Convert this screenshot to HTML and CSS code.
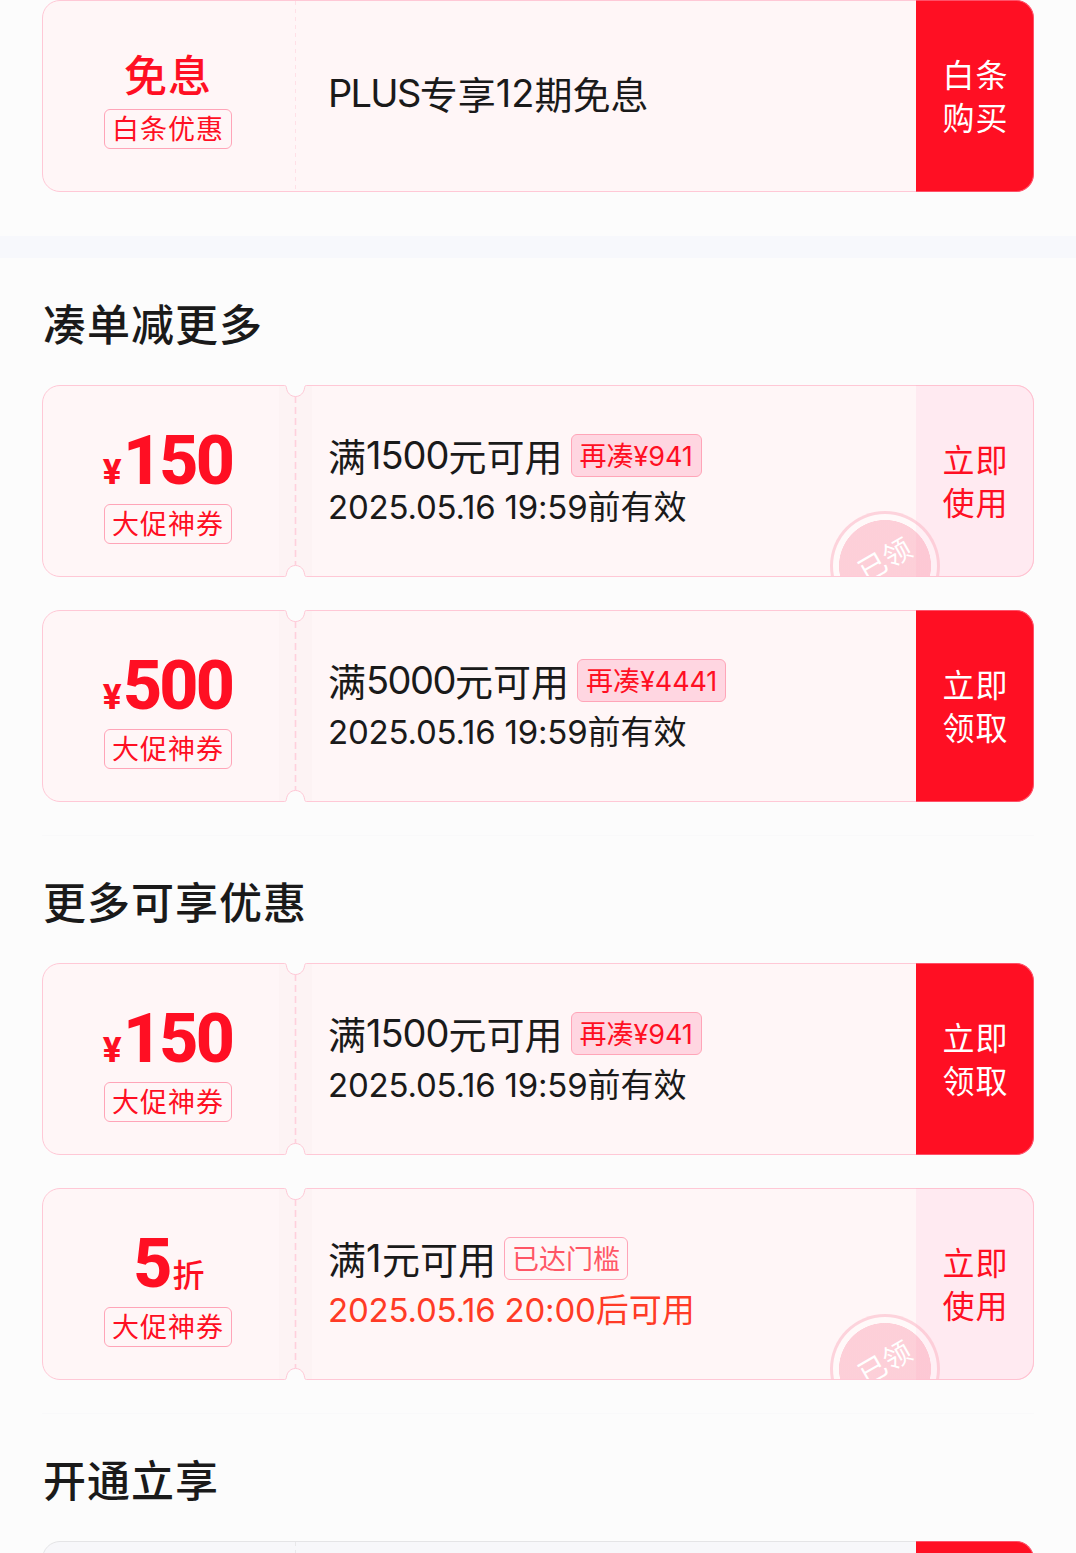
FILE: index.html
```html
<!DOCTYPE html>
<html lang="zh-CN">
<head>
<meta charset="utf-8">
<title>优惠券</title>
<link rel="stylesheet" href="styles.css">
</head>
<body>
<svg class="defs" width="0" height="0" aria-hidden="true">
  <symbol id="notch" viewBox="0 0 33 192">
    <path fill="#fdf3f4" d="M0 0H33V192H0Z"/>
    <path fill="#fcfcfc" d="M6.5 0C7.2 .8 7.3 1.6 7.4 2.6C8 7.9 11.6 11.5 16.5 11.5S25 7.9 25.6 2.6C25.7 1.6 25.8 .8 26.5 0Z"/>
    <path fill="#fcfcfc" d="M6.5 192C7.2 191.2 7.3 190.4 7.4 189.4C8 184.1 11.6 180.5 16.5 180.5S25 184.1 25.6 189.4C25.7 190.4 25.8 191.2 26.5 192Z"/>
    <path fill="none" stroke="#ffc8d6" d="M0 .5H5.5C7 .5 7.2 1.5 7.4 2.6C8 7.9 11.6 11.5 16.5 11.5S25 7.9 25.6 2.6C25.8 1.5 26 .5 27.5 .5H33M0 191.5H5.5C7 191.5 7.2 190.5 7.4 189.4C8 184.1 11.6 180.5 16.5 180.5S25 184.1 25.6 189.4C25.8 190.5 26 191.5 27.5 191.5H33"/>
    <path fill="none" stroke="#ffd0dc" stroke-width="1.6" stroke-dasharray="7 4" d="M16.5 11V180"/>
  </symbol>
</svg>
<main class="page">
  <section class="group group-first">
    <article class="coupon plain">
      <div class="value"><div class="word">免息</div><div class="label">白条优惠</div></div>
      <div class="info"><div class="title"><span class="latin plus">PLUS</span>专享<span class="latin term">12</span>期免息</div></div>
      <div class="action">白条<br>购买</div>
    </article>
  </section>
  <div class="band"></div>
  <section class="group">
    <h2>凑单减更多</h2>
    <article class="coupon">
      <div class="value"><div class="amount"><span class="yen">¥</span>150</div><div class="label">大促神券</div></div>
      <div class="info">
        <div class="title">满<span class="latin">1500</span>元可用<span class="tag">再凑<span class="latin">¥941</span></span></div>
        <div class="date"><span class="latin">2025.05.16 19:59</span>前有效</div>
      </div>
      <div class="action light">立即<br>使用</div>
      <svg class="notch" width="33" height="192"><use href="#notch"/></svg>
      <div class="clip"><div class="stamp"><span>已领</span></div></div>
    </article>
    <article class="coupon">
      <div class="value"><div class="amount"><span class="yen">¥</span>500</div><div class="label">大促神券</div></div>
      <div class="info">
        <div class="title">满<span class="latin wide">5000</span>元可用<span class="tag">再凑<span class="latin">¥4441</span></span></div>
        <div class="date"><span class="latin">2025.05.16 19:59</span>前有效</div>
      </div>
      <div class="action">立即<br>领取</div>
      <svg class="notch" width="33" height="192"><use href="#notch"/></svg>
    </article>
  </section>
  <section class="group ruled">
    <h2>更多可享优惠</h2>
    <article class="coupon">
      <div class="value"><div class="amount"><span class="yen">¥</span>150</div><div class="label">大促神券</div></div>
      <div class="info">
        <div class="title">满<span class="latin">1500</span>元可用<span class="tag">再凑<span class="latin">¥941</span></span></div>
        <div class="date"><span class="latin">2025.05.16 19:59</span>前有效</div>
      </div>
      <div class="action">立即<br>领取</div>
      <svg class="notch" width="33" height="192"><use href="#notch"/></svg>
    </article>
    <article class="coupon">
      <div class="value"><div class="amount">5<span class="unit">折</span></div><div class="label">大促神券</div></div>
      <div class="info">
        <div class="title">满<span class="latin single">1</span>元可用<span class="tag outline">已达门槛</span></div>
        <div class="date pending"><span class="latin">2025.05.16 20:00</span>后可用</div>
      </div>
      <div class="action light">立即<br>使用</div>
      <svg class="notch" width="33" height="192"><use href="#notch"/></svg>
      <div class="clip"><div class="stamp"><span>已领</span></div></div>
    </article>
  </section>
  <section class="group ruled">
    <h2>开通立享</h2>
    <article class="coupon plain gray">
      <div class="value"></div>
      <div class="info"></div>
      <div class="action"></div>
    </article>
  </section>
</main>
</body>
</html>
```
FILE: styles.css
```css
* { box-sizing: border-box; }
html, body { margin: 0; height: 1553px; overflow: hidden; }
body {
  background: #fcfcfc;
  color: #1a1a1a;
  font-family: "Noto Sans CJK SC", sans-serif;
}
.defs { position: absolute; }
.page { height: 1553px; overflow: hidden; }
.group {
  display: flex;
  flex-direction: column;
  gap: 32px;
  margin: 0 42px;
  padding: 35px 0 33px;
}
.coupon + .coupon { margin-top: 1px; }
.group-first { padding: 0 0 44px; }
.ruled { border-top: 1px solid #f9f9fa; }
.band { height: 22px; background: #f7f8fc; }
h2 {
  margin: 0;
  height: 60px;
  padding-left: 1px;
  font-size: 43px;
  line-height: 58px;
  font-weight: 500;
  letter-spacing: 1px;
}
.latin {
  font-family: Inter, sans-serif;
  line-height: 0;
}
.coupon {
  position: relative;
  display: flex;
  flex: none;
  height: 192px;
  border: 1px solid #ffc8d6;
  border-radius: 18px;
  background: #fff6f7;
}
.value {
  display: flex;
  flex-direction: column;
  align-items: center;
  width: 253px;
  padding: 42px 4px 0 0;
  color: #ff0f23;
}
.plain .value {
  background: repeating-linear-gradient(to bottom, #ffe0e7 0 4px, transparent 4px 8px) right / 1px 100% no-repeat;
}
.gray { background: #f7f7fa; border-color: #e4e4e6; }
.gray .value { background: repeating-linear-gradient(to bottom, #e8e8ea 0 4px, transparent 4px 8px) right / 1px 100% no-repeat; }
.word {
  height: 66px;
  padding-left: 1px;
  font-size: 43px;
  line-height: 60px;
  font-weight: 500;
  letter-spacing: 1px;
}
.amount {
  height: 76px;
  font-family: Roboto, "Noto Sans CJK SC", sans-serif;
  font-size: 68px;
  font-weight: 800;
  line-height: 66px;
  letter-spacing: -2.8px;
}
.yen { font-size: 35px; margin-right: 4px; }
.unit {
  margin-left: 3px;
  font: 500 32px/1 "Noto Sans CJK SC", sans-serif;
}
.label {
  width: 128px;
  height: 40px;
  border: 1px solid #ffa5b8;
  border-radius: 6px;
  text-align: center;
  font-size: 27px;
  line-height: 36px;
  letter-spacing: 1px;
  text-indent: 1px;
}
.info {
  flex: 1;
  padding: 44px 0 0 32px;
  white-space: nowrap;
}
.plain .info { padding-top: 67px; }
.title {
  display: flex;
  align-items: center;
  height: 50px;
  font-size: 38px;
  line-height: 50px;
}
.title .latin { letter-spacing: -1px; }
.title .wide { letter-spacing: -1.5px; }
.title .single { letter-spacing: .5px; }
.title .plus { letter-spacing: -1.7px; }
.title .term { letter-spacing: .1px; }
.tag {
  height: 43px;
  margin-left: 8px;
  padding: 0 8px;
  border: 1px solid #ffa5b8;
  border-radius: 6px;
  background: #ffd6e1;
  color: #ff0f23;
  font-size: 27px;
  line-height: 40px;
}
.tag .latin { letter-spacing: -.1px; }
.outline { padding: 0 7px; background: none; color: #ff5666; }
.date {
  height: 50px;
  font-size: 33px;
  line-height: 50px;
}
.date .latin { letter-spacing: -.2px; }
.pending { color: #ff3b26; }
.action {
  display: flex;
  align-items: center;
  justify-content: center;
  width: 118px;
  margin: -1px;
  padding: 0 0 2px 2px;
  border: 1px solid #ff5068;
  border-left: 0;
  border-radius: 0 18px 18px 0;
  background: #ff0f23;
  color: #fff;
  font-size: 32px;
  line-height: 43px;
  letter-spacing: 1px;
}
.light {
  border-color: #ffc2d1;
  background: #ffeaf1;
  color: #ff0f23;
}
.notch { position: absolute; left: 236px; top: -1px; }
.clip {
  position: absolute;
  inset: 0;
  overflow: hidden;
  border-radius: 17px;
}
.stamp {
  position: absolute;
  left: 787px;
  top: 125px;
  width: 110px;
  height: 110px;
  border: 3px solid rgba(250, 160, 178, .42);
  border-radius: 50%;
  background: radial-gradient(circle, rgba(250, 160, 178, .45) 45.7px, rgba(255, 255, 255, .3) 46.3px);
}
.stamp span {
  position: absolute;
  left: 23px;
  top: 26px;
  color: #fff;
  font-size: 28px;
  line-height: 36px;
  transform: rotate(-30deg);
}
```
